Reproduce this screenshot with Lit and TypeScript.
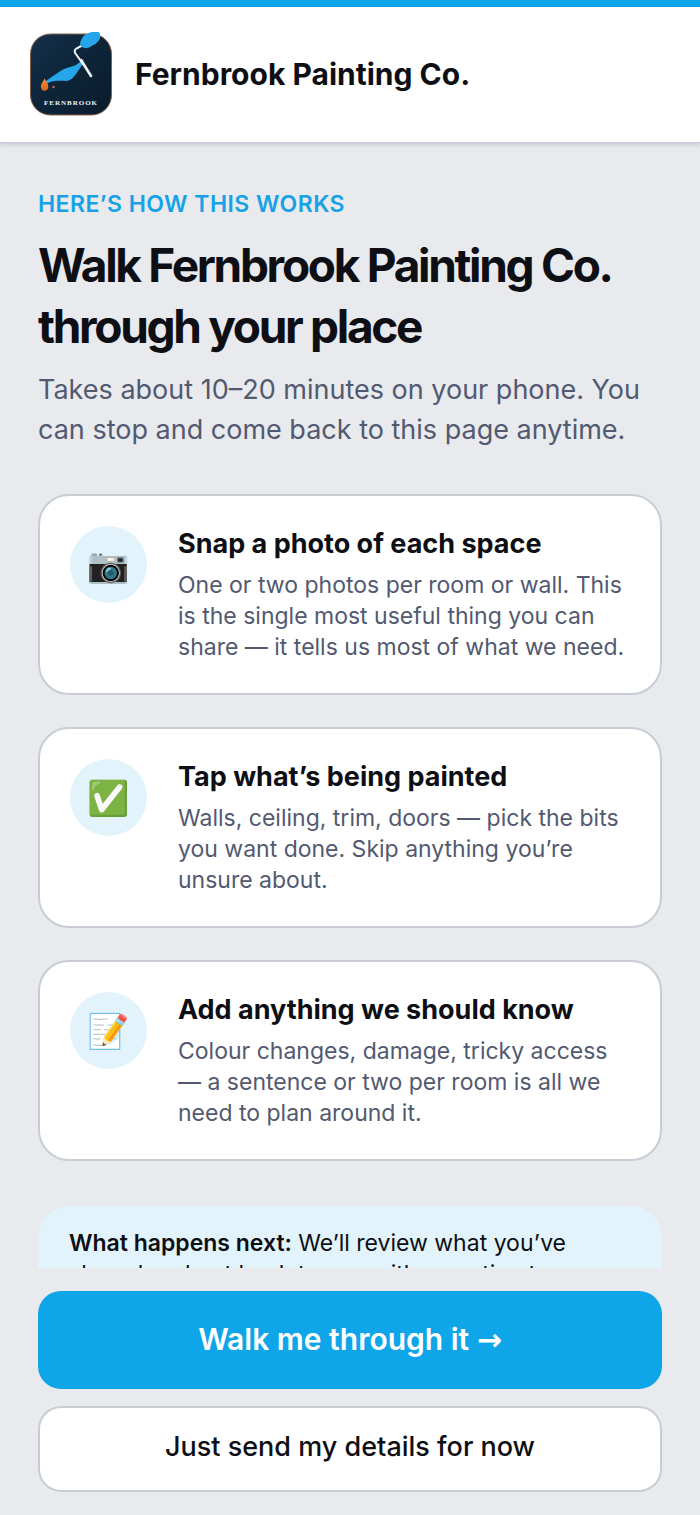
// src/app-root.ts
import { LitElement, html, css, svg } from 'lit';
import { customElement, property } from 'lit/decorators.js';

interface Step {
  icon: string;
  title: string;
  text: string;
}

const STEPS: Step[] = [
  {
    icon: '📷',
    title: 'Snap a photo of each space',
    text: 'One or two photos per room or wall. This is the single most useful thing you can share — it tells us most of what we need.',
  },
  {
    icon: '✅',
    title: 'Tap what’s being painted',
    text: 'Walls, ceiling, trim, doors — pick the bits you want done. Skip anything you’re unsure about.',
  },
  {
    icon: '📝',
    title: 'Add anything we should know',
    text: 'Colour changes, damage, tricky access — a sentence or two per room is all we need to plan around it.',
  },
];

const logoArt = svg`
  <defs>
    <linearGradient id="tile" x1="0" y1="0" x2="1" y2="1">
      <stop offset="0" stop-color="#14304a" />
      <stop offset="0.5" stop-color="#0d2438" />
      <stop offset="1" stop-color="#0a1c2d" />
    </linearGradient>
    <linearGradient id="flame" x1="0" y1="0" x2="0" y2="1">
      <stop offset="0" stop-color="#f58a3c" />
      <stop offset="1" stop-color="#e0641c" />
    </linearGradient>
  </defs>
  <rect x="0.5" y="2" width="81" height="81" rx="20" fill="url(#tile)" stroke="#8a6048" />
  <path d="M13 51C20 46 26 42 33 37.500C38 35 43 34.500 46 33C49 31 51 29 53.500 27C53.500 32 50 36 47 40.500C43 46 41 48.500 36 49C31 49 24 48 18 51Z" fill="#27a5ea" />
  <path d="M52 13.500L46.500 16.500Q43.500 18.500 45.500 21.500L53 32" fill="none" stroke="#f3f8fd" stroke-width="2" stroke-linecap="round" />
  <path d="M51 28L61 44" stroke="#f3f8fd" stroke-width="2.600" stroke-linecap="round" />
  <path d="M50 10.500L53 4.500Q55 2 60 0.500L62 0H69Q70.500 2 70 6.500Q69 9 66 11.500L59 15.500Q53.500 17.500 50.500 13.500Z" fill="#27a5ea" />
  <path d="M14.500 46.500C16 49.500 18.300 51 18.300 54.500Q18 58.800 14.500 58.800Q11 58.500 10.800 54.500C11 51 13.500 49.500 14.500 46.500Z" fill="url(#flame)" />
  <circle cx="23.500" cy="55" r="1.200" fill="#d9662a" />
  <text x="41" y="73" text-anchor="middle" class="logo-text">FERNBROOK</text>
`;

@customElement('step-card')
export class StepCard extends LitElement {
  static styles = css`
    :host {
      display: flex;
      gap: 31px;
      padding: 30px;
      border: 2px solid #c8cdd5;
      border-radius: 31px;
      background-color: #ffffff;
      box-sizing: border-box;
    }
    .icon {
      flex: none;
      display: flex;
      align-items: center;
      justify-content: center;
      width: 77px;
      height: 77px;
      border-radius: 50%;
      background-color: #e2f3fc;
      font-family: 'Noto Color Emoji', 'Inter', sans-serif;
      font-size: 34px;
      line-height: 40px;
    }
    .title {
      margin: 0 0 9px;
      color: #0d0f14;
      font-size: 27px;
      font-weight: 700;
      line-height: 35px;
    }
    .text {
      margin: 0;
      color: #525970;
      font-size: 23px;
      line-height: 31px;
    }
  `;

  @property({ type: String }) icon = '';
  @property({ type: String }) heading = '';
  @property({ type: String }) text = '';

  render() {
    return html`
      <span class="icon" aria-hidden="true">${this.icon}</span>
      <div>
        <h2 class="title">${this.heading}</h2>
        <p class="text">${this.text}</p>
      </div>
    `;
  }
}

@customElement('app-root')
export class AppRoot extends LitElement {
  static styles = css`
    :host {
      display: flex;
      flex-direction: column;
      height: 100vh;
      box-sizing: border-box;
      border-top: 7px solid #0fa5e9;
      background-color: #e8eaee;
      color: #0d0f14;
      font-family: 'Inter', sans-serif;
    }
    .header {
      position: relative;
      flex: none;
      display: flex;
      align-items: center;
      gap: 23px;
      padding: 25px 30px 26px;
      border-bottom: 1px solid #c5c9dc;
      background-color: #ffffff;
      box-shadow: 0 2px 4px rgba(30, 35, 80, 0.16);
    }
    .logo {
      width: 82px;
      height: 84px;
    }
    .logo-text {
      fill: #eef4fa;
      font-family: 'Liberation Serif', serif;
      font-size: 7px;
      font-weight: 700;
      letter-spacing: 1px;
    }
    .brand {
      font-size: 30px;
      font-weight: 700;
      line-height: 40px;
    }
    .content {
      flex: 1;
      min-height: 0;
      overflow: hidden;
      padding: 46px 38px 0;
    }
    .eyebrow {
      margin: 0 0 15px;
      color: #17a2e6;
      font-size: 23px;
      font-weight: 600;
      letter-spacing: 0.02em;
      line-height: 31px;
      text-transform: uppercase;
    }
    .heading {
      margin: 0 0 13px;
      font-size: 46px;
      font-weight: 700;
      letter-spacing: -0.05em;
      line-height: 61px;
    }
    .lede {
      margin: 0 0 44px;
      color: #525970;
      font-size: 27px;
      line-height: 40px;
    }
    .steps {
      display: flex;
      flex-direction: column;
      gap: 32px;
      margin: 0 0 45px;
      padding: 0;
      list-style: none;
    }
    .next {
      margin: 0;
      padding: 22px 31px;
      border-radius: 31px;
      background-color: #e2f3fc;
      font-size: 23px;
      line-height: 31px;
    }
    .next strong {
      font-weight: 600;
    }
    .actions {
      flex: none;
      display: flex;
      flex-direction: column;
      gap: 17px;
      padding: 23px 38px;
    }
    .button {
      border: 2px solid #c8cdd5;
      border-radius: 23px;
      padding: 19px 31px 23px;
      background-color: #ffffff;
      color: #0d0f14;
      font-family: inherit;
      font-size: 27px;
      font-weight: 500;
      line-height: 40px;
    }
    .button.primary {
      border-color: #0fa5e9;
      padding: 26px 31px 28px;
      background-color: #0fa5e9;
      color: #ffffff;
      font-size: 30px;
      font-weight: 600;
    }
    .arrow {
      font-family: 'DejaVu Sans', sans-serif;
      line-height: 1;
    }
  `;

  @property({ type: String }) company = 'Fernbrook Painting Co.';

  render() {
    return html`
      <header class="header">
        <svg class="logo" viewBox="0 0 82 84" role="img" aria-label="Fernbrook">${logoArt}</svg>
        <span class="brand">${this.company}</span>
      </header>
      <main class="content">
        <p class="eyebrow">Here’s how this works</p>
        <h1 class="heading">Walk ${this.company} through your place</h1>
        <p class="lede">
          Takes about 10–20 minutes on your phone. You can stop and come back to this page anytime.
        </p>
        <ul class="steps">
          ${STEPS.map(
            (step) => html`
              <li>
                <step-card .icon=${step.icon} .heading=${step.title} .text=${step.text}></step-card>
              </li>
            `
          )}
        </ul>
        <p class="next">
          <strong>What happens next:</strong> We’ll review what you’ve shared and get back to you
          with an estimate.
        </p>
      </main>
      <footer class="actions">
        <button class="button primary" type="button">
          Walk me through it <span class="arrow">→</span>
        </button>
        <button class="button" type="button">Just send my details for now</button>
      </footer>
    `;
  }
}
